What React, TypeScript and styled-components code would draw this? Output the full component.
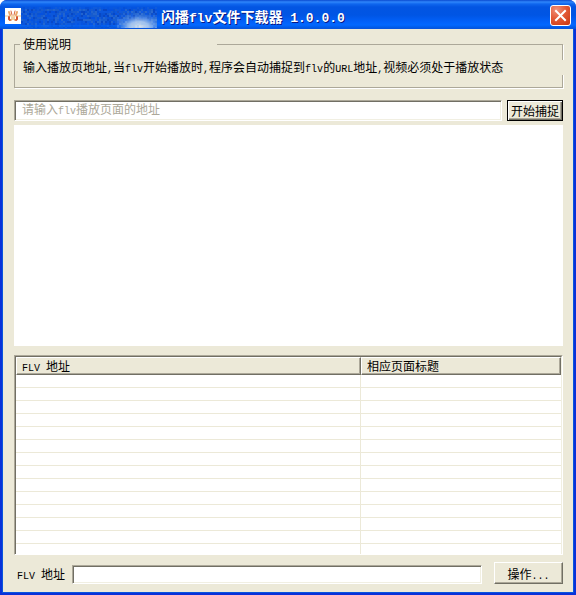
import React from "react";
import styled, { createGlobalStyle } from "styled-components";

const GlobalStyle = createGlobalStyle`
  * { box-sizing: border-box; }
  body { margin: 0; background: #fff; }
  body, button, input, table {
    font-family: "Noto Sans CJK SC", sans-serif;
    font-size: 12px;
    line-height: 16px;
    color: #000;
  }
`;

const face = "#ece9d8";
const shadow = "#aca899";
const dark = "#716f64";

const Window = styled.div`
  display: flex;
  flex-direction: column;
  height: 100vh;
  min-height: 420px;
  overflow: hidden;
  border-radius: 7px 7px 0 0;
  background: #0831d9;
`;

const TitleBar = styled.header`
  flex: none;
  display: flex;
  align-items: center;
  height: 29px;
  padding: 2px 5px 0 5px;
  background: linear-gradient(
    to bottom,
    #0a4ad0 0px,
    #2f86fb 2px,
    #0f66ee 4px,
    #0355e2 7px,
    #0055e4 15px,
    #0261fa 22px,
    #0268ff 25px,
    #0152d8 29px
  );
`;

const AppIcon = styled.svg`
  flex: none;
  width: 16px;
  height: 16px;
`;

const Smudge = styled.svg`
  flex: none;
  width: 136px;
  height: 22px;
  margin: 4px 4px 0 0;
`;

const Title = styled.h1`
  flex: 1;
  margin: 0;
  font-size: 14px;
  line-height: 20px;
  font-weight: 700;
  color: #fff;
  white-space: nowrap;
  text-shadow: 1px 1px 0 #0a1883;
`;

const Latin = styled.span<{ $large?: boolean }>`
  font-family: "Liberation Mono", monospace;
  font-size: ${(p) => (p.$large ? "13px" : "10px")};
  line-height: 1;
  white-space: pre;
`;

const CloseButton = styled.button`
  flex: none;
  display: flex;
  align-items: center;
  justify-content: center;
  width: 21px;
  height: 21px;
  padding: 0;
  border: 1px solid #fff;
  border-radius: 3px;
  background: radial-gradient(circle at 30% 20%, #f0907a 0, #e35a37 45%, #c8350f 100%);
`;

const Client = styled.main`
  flex: 1;
  min-height: 0;
  display: flex;
  flex-direction: column;
  margin: 0 3px 3px;
  padding: 8px 10px 8px 11px;
  background: ${face};
  box-shadow: 0 0 0 1px #0855dd;
`;

const Group = styled.fieldset`
  flex: none;
  min-width: 0;
  margin: 0;
  padding: 9px 0 12px;
  border: 1px solid ${shadow};
  box-shadow: 1px 1px 0 #fff;
`;

const Legend = styled.legend`
  width: 197px;
  margin-left: 5px;
  padding: 0 3px;
  line-height: 14px;
  background: ${face};
`;

const Instructions = styled.p`
  margin: 0 -2px 0 0;
  padding-left: 8px;
  line-height: 13px;
  white-space: nowrap;
  background: ${face};
`;

const CaptureRow = styled.form`
  flex: none;
  display: flex;
  gap: 5px;
  margin: 12px 0 4px;
`;

const TextInput = styled.input`
  flex: 1;
  min-width: 0;
  height: ${(p) => (p.type === "url" ? "21px" : "19px")};
  padding: 0 6px 2px;
  border: 1px solid;
  border-color: ${shadow} #fff #fff ${shadow};
  border-radius: 0;
  outline: 0;
  background: #fff;
  box-shadow: inset 1px 1px 0 ${dark}, inset -1px -1px 0 #f1efe2;
`;

const UrlField = styled.div`
  position: relative;
  flex: 1;
  display: flex;
`;

const Hint = styled.label`
  position: absolute;
  left: 8px;
  top: 1px;
  color: ${shadow};
  pointer-events: none;
`;

const PushButton = styled.button<{ $default?: boolean }>`
  flex: none;
  width: ${(p) => (p.$default ? "56px" : "69px")};
  height: ${(p) => (p.$default ? "21px" : "22px")};
  padding: 0;
  line-height: 17px;
  white-space: nowrap;
  border: 1px solid;
  border-color: ${(p) => (p.$default ? "#000" : `#fff ${dark} ${dark} #fff`)};
  border-radius: 0;
  background: ${face};
  box-shadow: ${(p) =>
    p.$default
      ? `inset 1px 1px 0 #fff, inset -1px -1px 0 ${dark}, inset -2px -2px 0 ${shadow}`
      : `inset -1px -1px 0 ${shadow}`};
`;

const Browser = styled.section`
  flex: 221 1 0;
  min-height: 0;
  background: #fff;
`;

const ListView = styled.div`
  flex: 198 1 0;
  min-height: 0;
  overflow: hidden;
  margin: 9px 0 7px;
  border: 1px solid;
  border-color: ${shadow} #fff #fff ${shadow};
  background: #fff;
`;

const Table = styled.table`
  width: 100%;
  table-layout: fixed;
  border-collapse: separate;
  border-spacing: 0;
  border: 1px solid;
  border-color: ${dark} #f1efe2 #f1efe2 ${dark};
`;

const TitleColumn = styled.col`
  width: 200px;
`;

const HeadCell = styled.th`
  height: 18px;
  padding: 0 5px;
  font-weight: 400;
  line-height: 14px;
  text-align: left;
  background: ${face};
  border: 1px solid;
  border-color: #fff ${dark} ${dark} #fff;
  box-shadow: inset -1px -1px 0 ${shadow};
`;

const Cell = styled.td`
  height: 13px;
  padding: 0;
  border-bottom: 1px solid ${face};
  &:first-child { border-right: 1px solid ${face}; }
`;

const Footer = styled.footer`
  flex: none;
  display: flex;
  align-items: flex-start;
`;

const FooterLabel = styled.label`
  width: 58px;
  padding: 4px 0 0 3px;
  white-space: nowrap;
`;

const FooterField = styled.div`
  flex: 1;
  display: flex;
  padding: 3px 12px 0 0;
`;

const noise = (x: number, y: number) => {
  const v = Math.sin(x * 127 + y * 311) * 43758;
  return v - Math.floor(v);
};

const blues = ["#0b51cf", "#1c5cc8", "#0a43ba", "#0f58d8", "#2a68c8", "#0650dc"];

const smudgeDots = Array.from({ length: 68 * 11 }, (_, i) => {
  const x = i % 68;
  const y = Math.floor(i / 68);
  const n = noise(x, y);
  const fill = blues[Math.floor(n * blues.length)];
  const edge = y === 0 || y > 8 ? 0.3 : 0.8;
  return <rect key={i} x={x * 2} y={y * 2} width="2" height="2" fill={fill} opacity={edge} />;
});

const glowDots = Array.from({ length: 20 * 9 }, (_, i) => {
  const x = 96 + (i % 20) * 2;
  const y = 4 + Math.floor(i / 20) * 2;
  return (
    <rect key={i} x={x} y={y} width="2" height="2" fill="#8fbcf2" opacity={noise(x, y) * 0.5 * (y / 20)} />
  );
});

const rows = Array.from({ length: 24 }, (_, i) => i);

export default function App() {
  const [url, setUrl] = React.useState("");
  return (
    <>
      <GlobalStyle />
      <Window>
        <TitleBar>
          <AppIcon viewBox="0 0 16 16" aria-hidden="true">
            <rect width="16" height="16" fill="#fff" />
            <path d="M0 8h16" stroke="#f3c98a" />
            <g fill="none" strokeLinecap="round">
              <path d="M4 4l1 3M12 4l-1 3" stroke="#eba667" strokeWidth="2" />
              <path d="M6 3l1 4M10 3l-1 4" stroke="#d8653c" strokeWidth="1" />
              <path d="M4 9v2l1 1M12 9v2l-1 1" stroke="#d4532f" strokeWidth="2" />
              <path d="M7 9v3H6M9 9v3h1" stroke="#e0a04c" strokeWidth="1" />
            </g>
          </AppIcon>
          <Smudge viewBox="0 0 136 22" aria-hidden="true">
            <defs>
              <radialGradient id="glow">
                <stop offset="0" stopColor="#dfe6ec" />
                <stop offset="0.4" stopColor="#b4cdee" stopOpacity="0.9" />
                <stop offset="1" stopColor="#2a74e8" stopOpacity="0" />
              </radialGradient>
            </defs>
            {smudgeDots}
            <ellipse cx="118" cy="20" rx="24" ry="14" fill="url(#glow)" />
            {glowDots}
          </Smudge>
          <Title>
            闪播<Latin $large>flv</Latin>文件下载器<Latin $large> 1.0.0.0</Latin>
          </Title>
          <CloseButton type="button" aria-label="关闭">
            <svg width="13" height="13" viewBox="0 0 13 13" aria-hidden="true">
              <path d="M2 2l9 9M11 2l-9 9" stroke="#fff" strokeWidth="2" strokeLinecap="square" />
            </svg>
          </CloseButton>
        </TitleBar>
        <Client>
          <Group>
            <Legend>使用说明</Legend>
            <Instructions>
              输入播放页地址<Latin>,</Latin>当<Latin>flv</Latin>开始播放时<Latin>,</Latin>
              程序会自动捕捉到<Latin>flv</Latin>的<Latin>URL</Latin>地址<Latin>,</Latin>
              视频必须处于播放状态
            </Instructions>
          </Group>
          <CaptureRow onSubmit={(e) => e.preventDefault()}>
            <UrlField>
              <TextInput id="page-url" type="url" value={url} onChange={(e) => setUrl(e.target.value)} />
              {url === "" && (
                <Hint htmlFor="page-url">
                  请输入<Latin>flv</Latin>播放页面的地址
                </Hint>
              )}
            </UrlField>
            <PushButton type="submit" $default>开始捕捉</PushButton>
          </CaptureRow>
          <Browser />
          <ListView>
            <Table>
              <colgroup>
                <col />
                <TitleColumn />
              </colgroup>
              <thead>
                <tr>
                  <HeadCell><Latin>FLV </Latin>地址</HeadCell>
                  <HeadCell>相应页面标题</HeadCell>
                </tr>
              </thead>
              <tbody>
                {rows.map((r) => (
                  <tr key={r}>
                    <Cell />
                    <Cell />
                  </tr>
                ))}
              </tbody>
            </Table>
          </ListView>
          <Footer>
            <FooterLabel htmlFor="flv-url"><Latin>FLV </Latin>地址</FooterLabel>
            <FooterField>
              <TextInput id="flv-url" type="text" />
            </FooterField>
            <PushButton type="button">操作<Latin>...</Latin></PushButton>
          </Footer>
        </Client>
      </Window>
    </>
  );
}
